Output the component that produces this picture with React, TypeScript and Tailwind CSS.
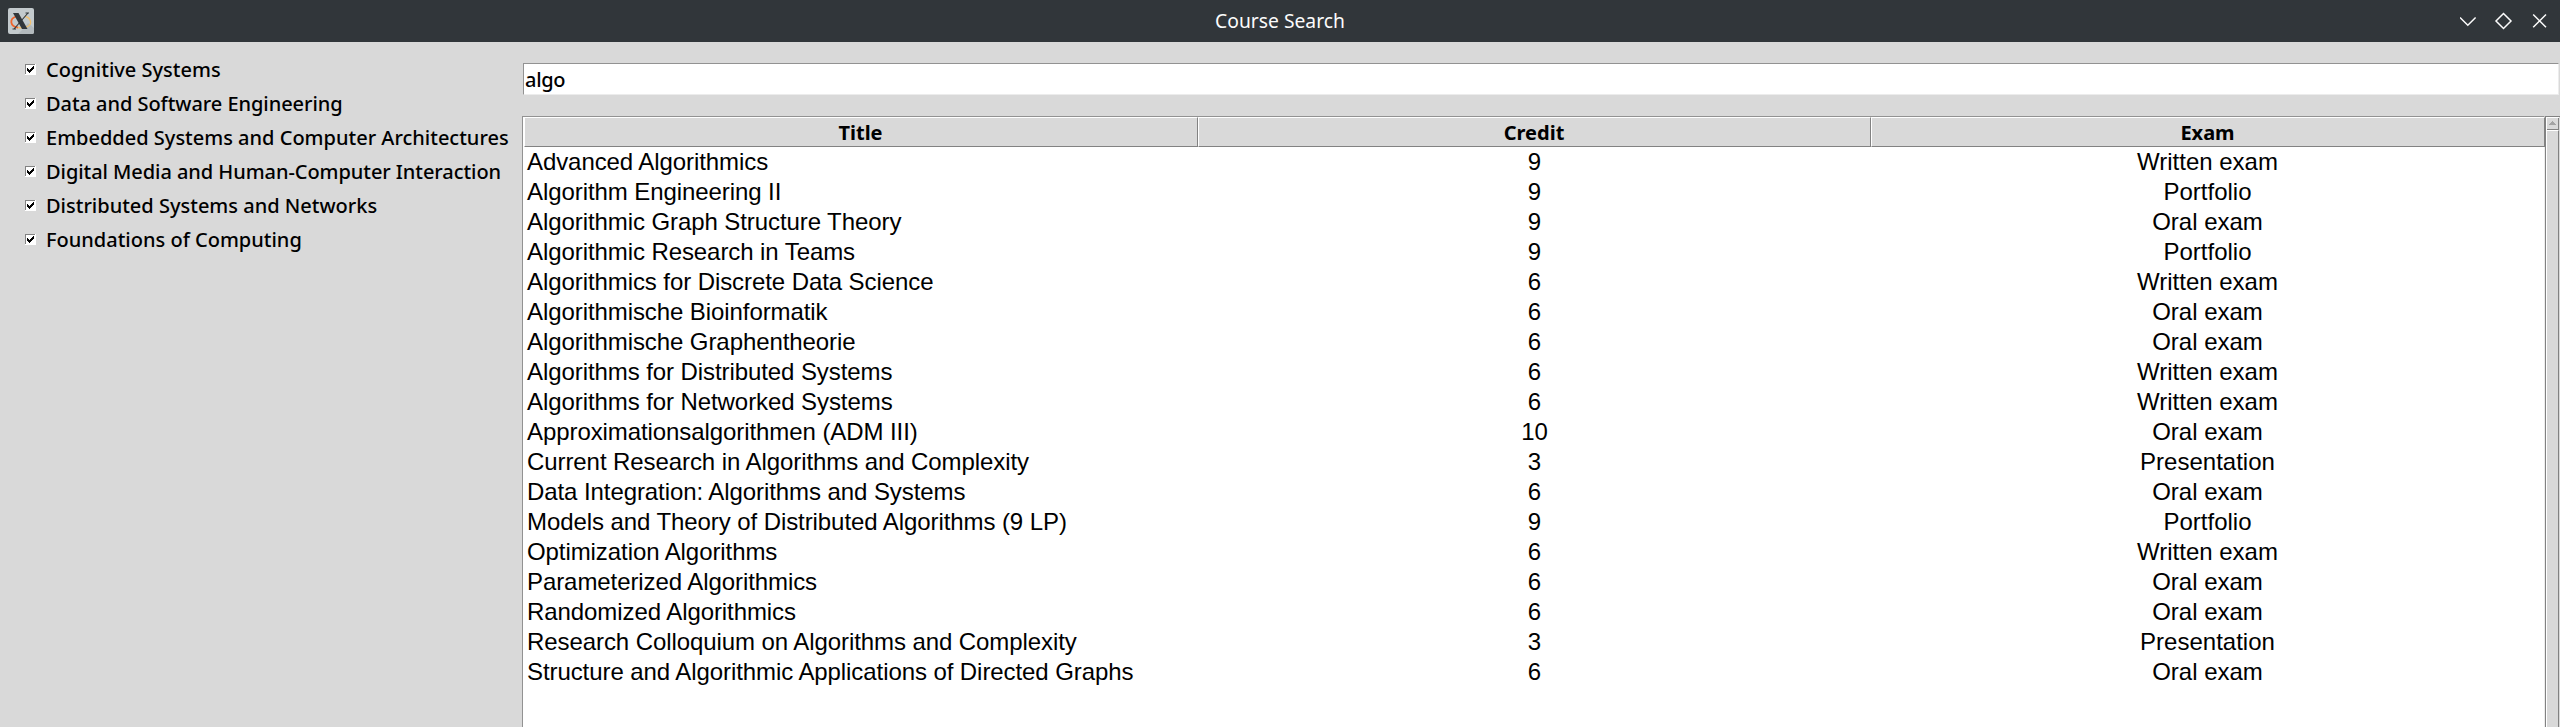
const areas: [string, string][] = [
  ["Cognitive Systems", "tracking-normal"],
  ["Data and Software Engineering", "tracking-[-0.05px]"],
  ["Embedded Systems and Computer Architectures", "tracking-normal"],
  ["Digital Media and Human-Computer Interaction", "tracking-[-0.06px]"],
  ["Distributed Systems and Networks", "tracking-normal"],
  ["Foundations of Computing", "tracking-normal"],
];

const courses: [string, number, string][] = [
  ["Advanced Algorithmics", 9, "Written exam"],
  ["Algorithm Engineering II", 9, "Portfolio"],
  ["Algorithmic Graph Structure Theory", 9, "Oral exam"],
  ["Algorithmic Research in Teams", 9, "Portfolio"],
  ["Algorithmics for Discrete Data Science", 6, "Written exam"],
  ["Algorithmische Bioinformatik", 6, "Oral exam"],
  ["Algorithmische Graphentheorie", 6, "Oral exam"],
  ["Algorithms for Distributed Systems", 6, "Written exam"],
  ["Algorithms for Networked Systems", 6, "Written exam"],
  ["Approximationsalgorithmen (ADM III)", 10, "Oral exam"],
  ["Current Research in Algorithms and Complexity", 3, "Presentation"],
  ["Data Integration: Algorithms and Systems", 6, "Oral exam"],
  ["Models and Theory of Distributed Algorithms (9 LP)", 9, "Portfolio"],
  ["Optimization Algorithms", 6, "Written exam"],
  ["Parameterized Algorithmics", 6, "Oral exam"],
  ["Randomized Algorithmics", 6, "Oral exam"],
  ["Research Colloquium on Algorithms and Complexity", 3, "Presentation"],
  ["Structure and Algorithmic Applications of Directed Graphs", 6, "Oral exam"],
];

function XLogo() {
  return (
    <svg width="26" height="26" viewBox="0 0 26 26">
      <rect width="26" height="26" rx="2" fill="#c3cacd" />
      <path d="M14 22L20 15L26 20V24Q26 26 24 26H10Z" fill="#b3babd" />
      <path d="M8 8.500C1 11 2 18.500 10 19.500" fill="none" stroke="#f0642c" strokeWidth="1.800" />
      <path d="M10 19.500C17 21 23.500 18 22.500 13.500C22 11 20 9 17 8.500" fill="none" stroke="#f3c06c" strokeWidth="1.300" />
      <path d="M5 5H10.500L19.500 21H14Z" fill="#31363a" />
      <path d="M20 5L6 21M17.500 5H21M4.500 21H8" stroke="#31363a" strokeWidth="1.100" />
    </svg>
  );
}

function TitleBar() {
  return (
    <header className="grid h-[42px] shrink-0 grid-cols-[1fr_auto_1fr] items-center bg-[#31363a]">
      <div className="pl-2">
        <XLogo />
      </div>
      <h1 className="text-[19.3px] leading-[26px] text-[#fcfcfc]">Course Search</h1>
      <svg className="justify-self-end" width="100" height="42" fill="none" stroke="#fcfcfc" strokeWidth="1.500">
        <path d="M0 17.500L7.800 25.300L15.600 17.500" />
        <path d="M43.500 13.500L51 21L43.500 28.500L36 21Z" />
        <path d="M73.200 14.500L86 27.300M86 14.500L73.200 27.300" />
      </svg>
    </header>
  );
}

function CheckBox({ label, tracking }: { label: string; tracking: string }) {
  return (
    <label className="flex h-[34px] items-center">
      <svg className="mb-px" width="11" height="11" shapeRendering="crispEdges">
        <rect width="11" height="11" fill="#fff" />
        <path d="M0 0H10V1H1V10H0Z" fill="#828282" />
        <path d="M8 2H9V5H8V6H7V7H6V8H5V9H4V8H3V7H2V4H3V5H4V6H5V5H6V4H7V3H8Z" fill="#000" />
      </svg>
      <span className={`ml-[10px] text-[20px] font-medium leading-[28px] whitespace-nowrap ${tracking}`}>{label}</span>
    </label>
  );
}

function Heading({ children }: { children: string }) {
  return (
    <div className="h-[30px] border-t border-r border-b border-l border-t-white border-r-[#828282] border-b-[#828282] border-l-white pr-px text-center text-[20px] font-bold leading-[30px]">
      {children}
    </div>
  );
}

function ScrollBar() {
  return (
    <div className="flex w-[15px] flex-col border-t border-l border-[#828282] bg-[#d9d9d9]">
      <svg width="14" height="13" shapeRendering="crispEdges">
        <path d="M0 0H13V1H1V13H0Z" fill="#fff" />
        <path d="M12 1H13V13H1V12H12Z" fill="#828282" />
        <path d="M3 8H10V7H9V6H8V5H7V4H6V5H5V6H4V7H3Z" fill="#a3a3a3" />
      </svg>
      <div className="mr-px flex-1 border-t border-r border-l border-t-white border-r-[#828282] border-l-white" />
    </div>
  );
}

export default function App() {
  return (
    <div className="flex h-[727px] w-[2560px] flex-col overflow-hidden bg-[#d9d9d9] font-['Noto_Sans',sans-serif] text-black">
      <TitleBar />
      <div className="flex min-h-0 flex-1">
        <aside className="w-[522px] shrink-0 pt-[11px] pl-[25px]">
          {areas.map(([a, tracking]) => (
            <CheckBox key={a} label={a} tracking={tracking} />
          ))}
        </aside>
        <main className="flex min-w-0 flex-1 flex-col pt-[21px]">
          <div className="mr-px ml-px h-[32px] shrink-0 border border-t-[#929292] border-r-[#ececec] border-b-[#ececec] border-l-[#929292] bg-white pl-px text-[20px] font-medium leading-[31px] tracking-[-0.3px]">
            algo
          </div>
          <div className="mt-[21px] flex min-h-0 flex-1">
            <section className="min-w-0 flex-1 border-t border-r border-l border-t-[#929292] border-r-[#ececec] border-l-[#929292] bg-white">
              <div className="ml-px grid grid-cols-[674px_673px_674px] bg-[#d9d9d9]">
                <Heading>Title</Heading>
                <Heading>Credit</Heading>
                <Heading>Exam</Heading>
              </div>
              <div className="ml-px font-['Liberation_Sans',sans-serif] text-[24px] leading-[30px]">
                {courses.map(([title, credit, exam]) => (
                  <div key={title} className="grid h-[30px] grid-cols-[674px_673px_674px]">
                    <span className="pl-[3px] tracking-[-0.08px] whitespace-nowrap">{title}</span>
                    <span className="text-center">{credit}</span>
                    <span className="pr-px text-center">{exam}</span>
                  </div>
                ))}
              </div>
            </section>
            <ScrollBar />
          </div>
        </main>
      </div>
    </div>
  );
}
